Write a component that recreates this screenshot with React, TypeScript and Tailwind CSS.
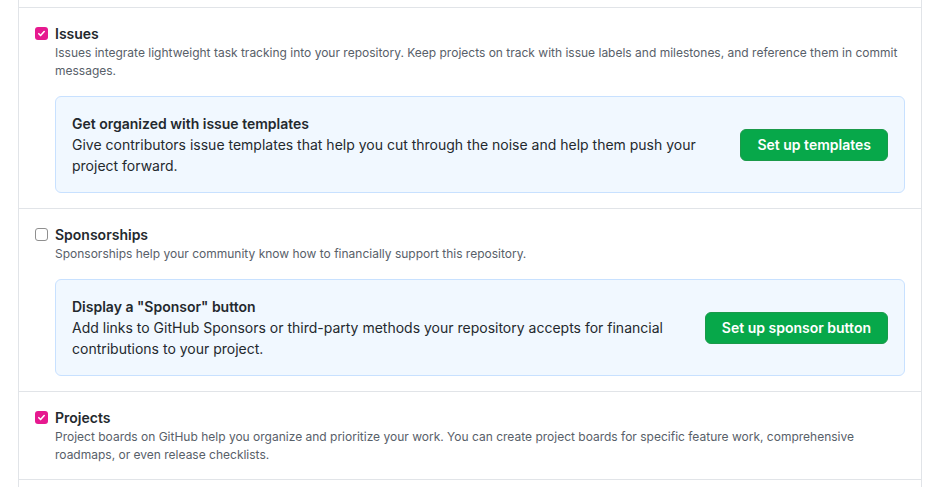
import React from 'react';

interface FeatureProps {
  title: string;
  description: string;
  checked: boolean;
  box?: { heading: string; text: string; button: string };
}

const Checkbox: React.FC<{ checked: boolean }> = ({ checked }) =>
  checked ? (
    <span className="flex h-[13px] w-[13px] items-center justify-center rounded-[3px] bg-[#e6198f]">
      <svg width="9" height="9" viewBox="0 0 10 10" fill="none">
        <path d="M2 5.2l2 2.1L8 2.8" stroke="white" strokeWidth="1.7" strokeLinecap="round" strokeLinejoin="round" />
      </svg>
    </span>
  ) : (
    <span className="block h-[13px] w-[13px] rounded-[3px] border border-[#8f8f8f] bg-white" />
  );

const Feature: React.FC<FeatureProps> = ({ title, description, checked, box }) => (
  <div className="border-t border-[#e1e4e8] px-4 pt-[15px] pb-[15px]">
    <div className="flex">
      <div className="w-[20px] shrink-0 pt-[4px]">
        <Checkbox checked={checked} />
      </div>
      <div className="flex-1">
        <div className="text-[14px] leading-[21px] font-semibold text-[#24292e]">{title}</div>
        <p className="text-[12px] leading-[18px] text-[#586069]">{description}</p>
        {box && (
          <div className="mt-[16px] flex h-[97px] items-center rounded-[6px] border border-[#c8e1ff] bg-[#f1f8ff] px-4">
            <div className="flex-1 pr-4 text-[14px] leading-[21px] text-[#24292e]">
              <div className="font-semibold">{box.heading}</div>
              <div>{box.text}</div>
            </div>
            <button className="ml-4 h-[32px] shrink-0 rounded-[6px] border border-[#1b9a4a] bg-[#07a84a] px-4 text-[14px] font-semibold text-white">
              {box.button}
            </button>
          </div>
        )}
      </div>
    </div>
  </div>
);

export default function App() {
  return (
    <div className="h-[487px] overflow-hidden bg-white" style={{ fontFamily: 'Inter, "Noto Sans", sans-serif' }}>
      <div className="ml-[18px] w-[904px] border-x border-[#e1e4e8]">
        <div className="h-[7px]" />
        <Feature
          title="Issues"
          checked
          description="Issues integrate lightweight task tracking into your repository. Keep projects on track with issue labels and milestones, and reference them in commit messages."
          box={{
            heading: 'Get organized with issue templates',
            text: 'Give contributors issue templates that help you cut through the noise and help them push your project forward.',
            button: 'Set up templates',
          }}
        />
        <Feature
          title="Sponsorships"
          checked={false}
          description="Sponsorships help your community know how to financially support this repository."
          box={{
            heading: 'Display a "Sponsor" button',
            text: 'Add links to GitHub Sponsors or third-party methods your repository accepts for financial contributions to your project.',
            button: 'Set up sponsor button',
          }}
        />
        <Feature
          title="Projects"
          checked
          description="Project boards on GitHub help you organize and prioritize your work. You can create project boards for specific feature work, comprehensive roadmaps, or even release checklists."
        />
        <div className="h-[20px] border-t border-[#e1e4e8]" />
      </div>
    </div>
  );
}
